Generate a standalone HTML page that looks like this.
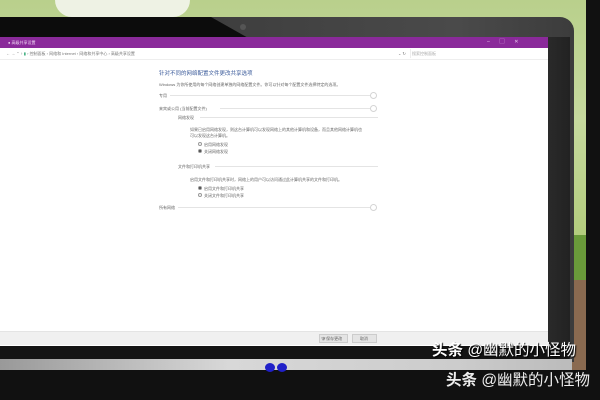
<!DOCTYPE html>
<html><head><meta charset="utf-8"><style>
*{margin:0;padding:0;box-sizing:border-box}
body{width:600px;height:400px;overflow:hidden;position:relative;background:#111;font-family:"Liberation Sans","Noto Sans CJK SC",sans-serif}
.a{position:absolute}
.t{position:absolute;font-size:4px;color:#666;white-space:nowrap;line-height:5px}
.ln{position:absolute;height:1px;background:#e4e4e4}
.c{position:absolute;width:7px;height:7px;border:1px solid #d4d4d4;border-radius:50%}
.r{position:absolute;width:4px;height:4px;border:1px solid #999;border-radius:50%}
</style></head><body>
<div class="a" style="left:0;top:0;width:586px;height:400px;background:linear-gradient(180deg,#b9d08c 0%,#c6d99e 30%,#b3cc7c 60%,#9fbd63 100%)"></div>
<div class="a" style="left:55px;top:0;width:135px;height:17px;background:#eef2e4;border-radius:0 0 40px 40px"></div>
<div class="a" style="left:572px;top:235px;width:14px;height:45px;background:#6a9a3a"></div>
<div class="a" style="left:572px;top:280px;width:14px;height:90px;background:#8a6a50"></div>
<!-- lid -->
<div class="a" style="left:-10px;top:17px;width:584px;height:345px;background:linear-gradient(90deg,#333 0%,#4a4a4a 80%,#3c3c3c 100%);border-radius:0 14px 0 0"></div>
<div class="a" style="left:-10px;top:17px;width:260px;height:22px;background:#0c0c0c;clip-path:polygon(0 0,85% 0,100% 100%,0 100%)"></div>
<div class="a" style="left:240px;top:24px;width:6px;height:6px;border-radius:50%;background:#555"></div>
<div class="a" style="left:548px;top:37px;width:22px;height:325px;background:linear-gradient(90deg,#2a2a2a,#222)"></div>
<div class="a" style="left:0;top:345px;width:569px;height:14px;background:#141414"></div>
<div class="a" style="left:0;top:359px;width:572px;height:11px;background:linear-gradient(90deg,#999,#d8d8d8 40%,#ccc 80%,#bbb)"></div>
<div class="a" style="left:0;top:370px;width:600px;height:30px;background:#111"></div>
<div class="a" style="left:586px;top:0;width:14px;height:400px;background:#111"></div>
<div class="a" style="left:265px;top:363px;width:10px;height:9px;border-radius:50%;background:#2020c8"></div>
<div class="a" style="left:277px;top:363px;width:10px;height:9px;border-radius:50%;background:#2020c8"></div>
<!-- window -->
<div class="a" style="left:0;top:37px;width:548px;height:11px;background:#8a2a9a"></div>
<div class="t" style="left:8px;top:40px;color:#f0d8f4">● 高级共享设置</div>
<div class="t" style="left:487px;top:40px;color:#e8c8ee;font-size:5px">–&nbsp;&nbsp;&nbsp;&nbsp;&nbsp;&nbsp;&nbsp;▢&nbsp;&nbsp;&nbsp;&nbsp;&nbsp;&nbsp;&nbsp;✕</div>
<div class="a" style="left:0;top:48px;width:548px;height:298px;background:#fff"></div>
<div class="ln" style="left:0;top:59px;width:548px;background:#eee"></div>
<div class="t" style="left:6px;top:51px;color:#777">← → ⌃ ↑ <span style="color:#3a7">▮</span> › 控制面板 › 网络和 Internet › 网络和共享中心 › 高级共享设置</div>
<div class="t" style="left:398px;top:51px;color:#777">⌄ ↻</div>
<div class="a" style="left:410px;top:49px;width:130px;height:9px;border-left:1px solid #eee"></div>
<div class="t" style="left:412px;top:51px;color:#aaa">搜索控制面板</div>
<div class="t" style="left:159px;top:71px;font-size:5.5px;color:#3a5a9a;line-height:6px">针对不同的网络配置文件更改共享选项</div>
<div class="t" style="left:159px;top:82px;">Windows 为你所使用的每个网络创建单独的网络配置文件。你可以针对每个配置文件选择特定的选项。</div>
<div class="t" style="left:159px;top:93px">专用</div><div class="ln" style="left:170px;top:95px;width:200px"></div><div class="c" style="left:370px;top:92px"></div>
<div class="t" style="left:159px;top:106px">来宾或公用 (当前配置文件)</div><div class="ln" style="left:220px;top:108px;width:150px"></div><div class="c" style="left:370px;top:105px"></div>
<div class="t" style="left:178px;top:115px">网络发现</div><div class="ln" style="left:200px;top:117px;width:178px"></div>
<div class="t" style="left:190px;top:127px">如果已启用网络发现，则这台计算机可以发现网络上的其他计算机和设备，而且其他网络计算机也</div>
<div class="t" style="left:190px;top:133px">可以发现这台计算机。</div>
<div class="r" style="left:198px;top:142px"></div><div class="t" style="left:204px;top:142px">启用网络发现</div>
<div class="r" style="left:198px;top:149px;background:#444"></div><div class="t" style="left:204px;top:149px">关闭网络发现</div>
<div class="t" style="left:178px;top:164px">文件和打印机共享</div><div class="ln" style="left:215px;top:166px;width:163px"></div>
<div class="t" style="left:190px;top:177px">启用文件和打印机共享时，网络上的用户可以访问通过此计算机共享的文件和打印机。</div>
<div class="r" style="left:198px;top:186px;background:#444"></div><div class="t" style="left:204px;top:186px">启用文件和打印机共享</div>
<div class="r" style="left:198px;top:193px"></div><div class="t" style="left:204px;top:193px">关闭文件和打印机共享</div>
<div class="t" style="left:159px;top:205px">所有网络</div><div class="ln" style="left:178px;top:207px;width:192px"></div><div class="c" style="left:370px;top:204px"></div>
<div class="a" style="left:0;top:331px;width:548px;height:14px;background:#f0f0f0;border-top:1px solid #e4e4e4"></div>
<div class="a" style="left:319px;top:334px;width:29px;height:9px;background:#e4e4e4;border:1px solid #ccc"></div>
<div class="t" style="left:321px;top:336px">🛡保存更改</div>
<div class="a" style="left:352px;top:334px;width:25px;height:9px;background:#e4e4e4;border:1px solid #ccc"></div>
<div class="t" style="left:360px;top:336px">取消</div>
<!-- watermarks -->
<div class="a" style="left:432px;top:342px;font-size:15.5px;color:#fff;line-height:18px;text-shadow:1px 1px 1px #000;white-space:nowrap"><b>头条</b> @幽默的小怪物</div>
<div class="a" style="left:446px;top:372px;font-size:15.5px;color:#eee;line-height:18px;white-space:nowrap"><b>头条</b> @幽默的小怪物</div>
</body></html>
